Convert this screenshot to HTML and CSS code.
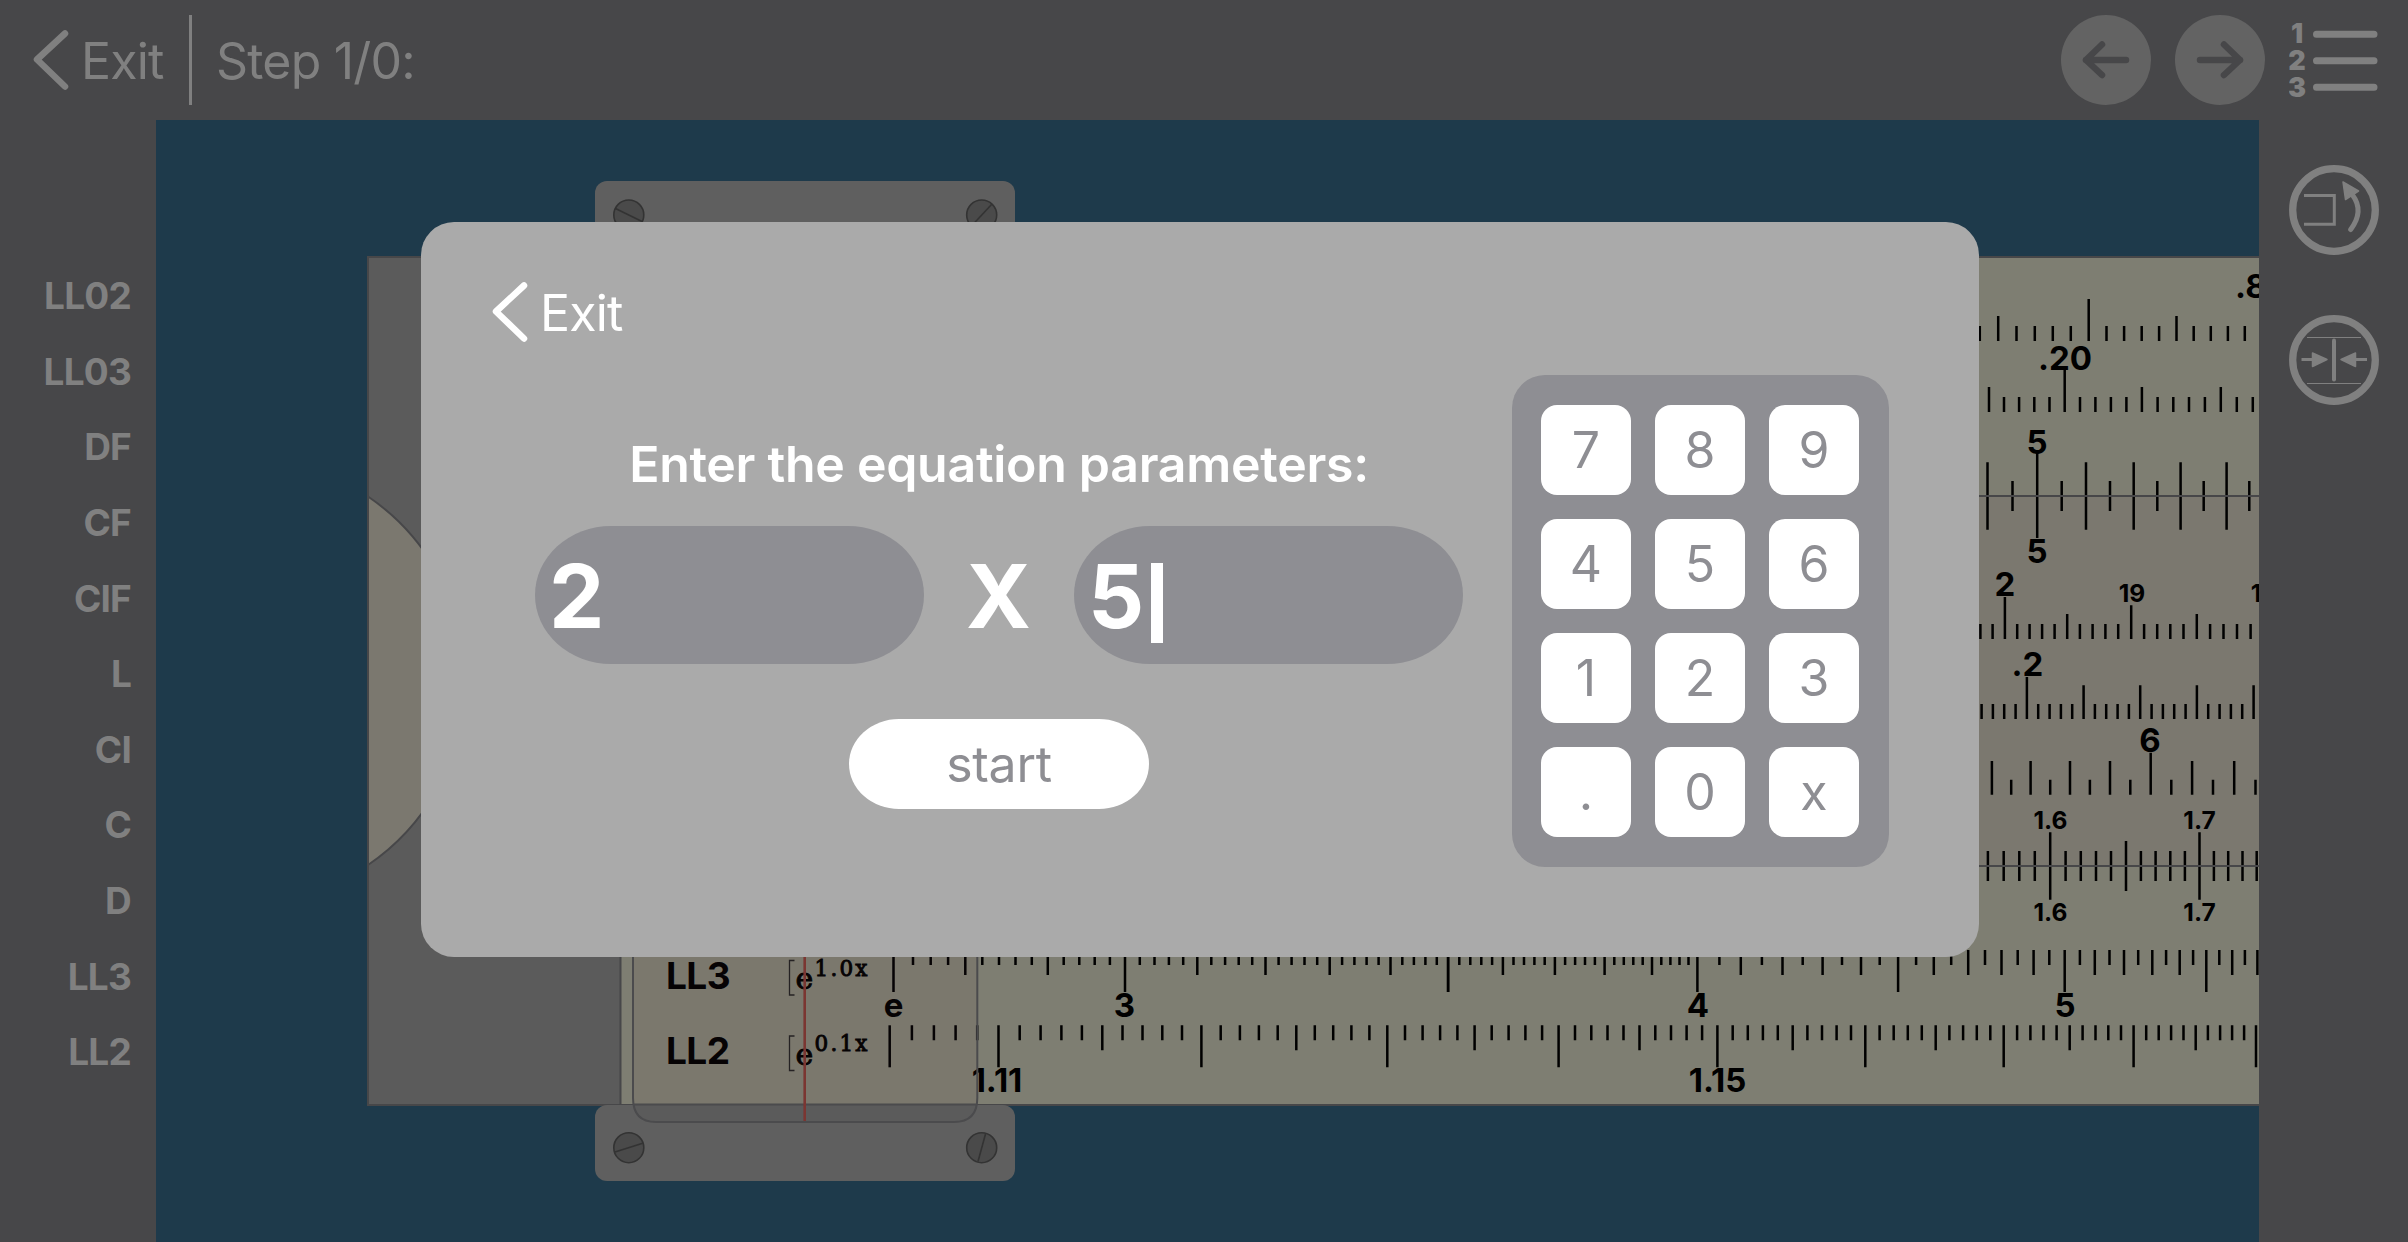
FILE: index.html
```html
<!DOCTYPE html>
<html lang="en">
<head>
<meta charset="utf-8">
<title>Slide rule</title>
<link rel="stylesheet" href="styles.css">
</head>
<body>
<div class="app">
  <header class="topbar">
    <div class="exit">
      <svg class="chevron" width="36" height="60" viewBox="0 0 36 60"><path d="M32 3.500L4 29.500L32 56.500"/></svg>
      <span class="exit-text">Exit</span>
    </div>
    <div class="divider"></div>
    <span class="step">Step 1/0:</span>
    <div class="nav">
      <svg width="90" height="90" viewBox="0 0 90 90"><circle class="disc" cx="45" cy="45" r="45"/><path class="arrow" d="M65 45H25M41 29.500L25 45L41 60"/></svg>
      <svg width="90" height="90" viewBox="0 0 90 90"><circle class="disc" cx="45" cy="45" r="45"/><path class="arrow" d="M25 45H65M49 29.500L65 45L49 60"/></svg>
      <svg class="list" width="90" height="90" viewBox="0 0 90 90">
        <text x="8" y="28">1</text><text x="8" y="55">2</text><text x="8" y="82">3</text>
        <path d="M27.500 19.300H85M27.500 45.700H85M27.500 72.300H85"/>
      </svg>
    </div>
  </header>
  <div class="main">
    <aside class="labels">
      <span>LL02</span><span>LL03</span><span>DF</span><span>CF</span><span>CIF</span><span>L</span><span>CI</span><span>C</span><span>D</span><span>LL3</span><span>LL2</span>
    </aside>
    <div class="stage">
      <svg class="rule" width="2103" height="1122" viewBox="156 120 2103 1122">
        <g class="edge">
          <rect class="metal" x="368" y="257" width="1920" height="848"/>
          <rect class="body" x="620.500" y="257" width="1700" height="848"/>
          <rect class="slide" x="620.500" y="496" width="1700" height="370"/>
          <path class="slide" d="M368 496.500A222.800 222.800 0 0 1 368 865Z"/>
        </g>
        <g id="scales"></g>
        <g class="name"><text x="666" y="988.700">LL3</text><text x="666" y="1064">LL2</text></g>
        <g class="formula">
          <path d="M794.500 960.500H789.500V995H794.500M794.500 1036H789.500V1070.500H794.500"/>
          <text class="base" x="795.500" y="989">e</text><text class="power" x="814.500" y="975.700" textLength="53">1.0x</text>
          <text class="base" x="795.500" y="1064.500">e</text><text class="power" x="814.500" y="1051.300" textLength="53">0.1x</text>
        </g>
        <g class="plate">
          <rect x="595" y="181" width="420" height="76" rx="12"/>
          <rect x="595" y="1105" width="420" height="76" rx="12"/>
        </g>
        <path class="glass-rule" d="M633 257H977V1105H633Z"/>
        <path class="glass-plate" d="M633 1105H977Q975 1122 955 1122H655Q635 1122 633 1105Z"/>
        <path class="glass-edge" d="M633 257V1098Q633 1122 656 1122H954Q977.300 1122 977.300 1098V257M633 1104.500H977"/>
        <path class="hairline" d="M804.700 257V1121"/>
        <g class="screw">
          <circle cx="628.800" cy="215" r="15"/><path d="M615.500 208.500L642 221.500"/>
          <circle cx="981.700" cy="215" r="15"/><path d="M992 204L971.500 226"/>
          <circle cx="628.800" cy="1147.700" r="15"/><path d="M615 1152L642.700 1143.300"/>
          <circle cx="981.700" cy="1147.700" r="15"/><path d="M978 1161.500L985.500 1134"/>
        </g>
      </svg>
    </div>
    <aside class="tools">
      <svg width="90" height="90" viewBox="0 0 90 90">
        <circle cx="45" cy="45" r="41.300"/>
        <path class="thin" d="M15 30.500H45.300V59.300H15"/>
        <path class="arc" d="M61.700 64.500Q75.500 46 63.500 30"/>
        <path class="head" d="M54 17L69.500 26L56.500 34.500Z"/>
      </svg>
      <svg width="90" height="90" viewBox="0 0 90 90">
        <circle cx="45" cy="45" r="41.300"/>
        <path class="hair" d="M18 22.500H72M18 68.500H72"/>
        <path class="bar" d="M45 25.500V64.500"/>
        <path class="thin" d="M12.500 44.500H24M66 44.500H78"/>
        <path class="head" d="M23.500 38L38 44.500L23.500 51.500ZM66.500 38L52 44.500L66.500 51.500Z"/>
      </svg>
    </aside>
  </div>

  <section class="dialog">
    <div class="exit">
      <svg class="chevron" width="36" height="60" viewBox="0 0 36 60"><path d="M32 3.500L4 29.500L32 56.500"/></svg>
      <span class="exit-text">Exit</span>
    </div>
    <div class="form">
      <h1 class="title">Enter the equation parameters:</h1>
      <div class="equation">
        <div class="field">2</div>
        <span class="operator">X</span>
        <div class="field">5<i class="caret"></i></div>
      </div>
      <button class="start">start</button>
    </div>
    <div class="keypad">
      <button>7</button><button>8</button><button>9</button>
      <button>4</button><button>5</button><button>6</button>
      <button>1</button><button>2</button><button>3</button>
      <button>.</button><button>0</button><button>x</button>
    </div>
  </section>
</div>
<script src="scales.js"></script>
</body>
</html>
```
FILE: styles.css
```css
* { box-sizing: border-box; }
body { margin: 0; background: #474749; font-family: Inter, "Liberation Sans", sans-serif; }
button { border: 0; padding: 0; font: inherit; color: #8e8e93; background: #fff; }
svg { display: block; flex: none; }
.app { position: relative; width: 2408px; height: 1242px; display: flex; flex-direction: column; overflow: hidden; }

.topbar { height: 120px; display: flex; align-items: center; padding: 0 29px 0 33px; color: #808080; }
.exit { display: flex; align-items: center; height: 62px; }
.chevron { fill: none; stroke: currentColor; stroke-width: 6.5; stroke-linecap: round; stroke-linejoin: round; }
.exit-text, .step { font-size: 50px; line-height: 62px; letter-spacing: -.8px; white-space: nowrap; padding-top: 2px; }
.exit-text { width: 84px; margin-left: 12px; }
.divider { width: 3px; height: 90px; margin-left: 24px; background: #808080; }
.step { margin-left: 24px; }
.nav { display: flex; gap: 24px; margin-left: auto; }
.disc { fill: #636363; }
.arrow { fill: none; stroke: #474749; stroke-width: 6.5; stroke-linecap: round; stroke-linejoin: round; }
.list { fill: #808080; font-size: 27px; font-weight: 900; text-anchor: middle; }
.list path { stroke: #808080; stroke-width: 7; stroke-linecap: round; }

.main { flex: 1; display: flex; }
.labels { width: 156px; padding: 138.2px 25px 0 0; display: flex; flex-direction: column; text-align: right; color: #808080; font-size: 37px; font-weight: 700; letter-spacing: -.8px; line-height: 75.6px; }
.stage { width: 2103px; background: #1e3a4b; overflow: hidden; }
.tools { flex: 1; padding: 45px 0 0 30px; display: flex; flex-direction: column; gap: 60px; }
.tools svg { fill: none; stroke: #808080; }
.tools circle { stroke-width: 7.3; }
.tools .thin { stroke-width: 3; }
.tools .hair { stroke-width: 1; }
.tools .bar { stroke-width: 4; stroke-linecap: round; }
.tools .arc { stroke-width: 5; stroke-linecap: round; }
.tools .head { fill: #808080; stroke-width: 1.5; stroke-linejoin: round; }

.edge { stroke: #474749; stroke-width: 2; }
.metal { fill: #5b5b5b; }
.body { fill: #7e7e72; }
.slide { fill: #7b786f; }
.tick { stroke: #000; stroke-width: 2.5; fill: none; }
.num { font-size: 33px; font-weight: 650; text-anchor: middle; }
.num-small { font-size: 24.5px; font-weight: 650; text-anchor: middle; }
.name { font-size: 37px; font-weight: 700; letter-spacing: -.6px; }
.formula { font-family: "DejaVu Serif", serif; }
.formula path { fill: none; stroke: #222; stroke-width: 1.3; }
.base { font-size: 30px; stroke: #000; stroke-width: .9; }
.power { font-size: 21.5px; stroke: #000; stroke-width: .9; }
.plate { fill: #5f5f5f; }
.glass-rule { fill: rgba(88, 40, 60, .07); }
.glass-plate { fill: #5b5b5b; }
.glass-edge { fill: none; stroke: #4b4b4d; stroke-width: 2; }
.hairline { stroke: #7b3632; stroke-width: 2.6; }
.screw { fill: #4a4a4a; stroke: #333; stroke-width: 1.6; }

.dialog { position: absolute; left: 421px; top: 222px; width: 1558px; height: 735px; padding: 59px 90px 0 71px; border-radius: 33px; background: #aaa; color: #fff; display: grid; grid-template-columns: 971px 377px; grid-template-rows: 94px auto; column-gap: 49px; }
.dialog .exit { align-self: start; }
.form { padding: 58px 0 0 43px; grid-row: 2; display: flex; flex-direction: column; align-items: center; }
.title { margin: 0 0 31px; font-size: 50px; font-weight: 600; line-height: 62px; letter-spacing: -.28px; white-space: nowrap; }
.equation { width: 928px; display: flex; align-items: center; justify-content: space-between; font-size: 88px; font-weight: 700; line-height: 138px; }
.operator { padding: 2px 1px 0 0; line-height: 136px; }
.field { width: 389px; height: 138px; padding: 2px 0 0 14px; display: flex; align-items: center; border-radius: 76px / 69px; background: #8e8e93; line-height: 136px; }
.caret { width: 12px; height: 80px; margin: 14px 0 0 7px; background: #fff; }
.start { width: 300px; height: 90px; margin-top: 55px; border-radius: 50px / 45px; font-size: 50px; letter-spacing: -.3px; }
.keypad { grid-column: 2; grid-row: 2; height: 492px; padding: 30px 0 0 29px; display: grid; grid-template-columns: repeat(3, 90px); grid-auto-rows: 90px; gap: 24px; border-radius: 33px; background: #8e8e93; }
.keypad button { border-radius: 16px; font-size: 50px; }
```
FILE: scales.js
```js
const ORIGIN = 893.5, DECADE = 5667, LEFT = 880, RIGHT = 2275;
const SHORT = 15, MID = 25, LONG = 33.7, TALL = 42;
const scales = document.getElementById('scales');

// Draws ticks for integer steps from..to (value = n * unit).
// lengths: [divisor, length] pairs, the first divisor that fits wins.
function ticks(from, to, unit, pos, y, dir, lengths) {
  let d = '';
  for (let n = from; n <= to; n++) {
    const x = ORIGIN + DECADE * pos(n * unit);
    const rule = lengths.find(([k]) => n % k === 0);
    if (!rule || !(x > LEFT && x < RIGHT)) continue;
    d += `M${x.toFixed(1)} ${y}v${dir * rule[1]}`;
  }
  scales.insertAdjacentHTML('beforeend', `<path class="tick" d="${d}"/>`);
}
function label(text, x, y, small) {
  scales.insertAdjacentHTML('beforeend', `<text class="${small ? 'num-small' : 'num'}" x="${x}" y="${y}">${text}</text>`);
}

const { log10, log, PI } = Math;
ticks(820, 900, .001, v => log10(-10 * log(v)), 341, -1, [[10, TALL], [5, MID], [1, SHORT]]);
ticks(85, 120, .002, v => log10(-log(v)), 412, -1, [[50, TALL], [5, MID], [1, SHORT]]);
for (const dir of [-1, 1]) {
  ticks(80, 120, .05, v => log10(v / PI), 496, dir, [[20, TALL], [2, LONG], [1, SHORT]]);
  ticks(140, 180, .01, v => log10(v), 866, dir, [[10, LONG], [5, MID], [1, SHORT]]);
}
ticks(175, 220, .01, v => log10(PI / v), 639, -1, [[100, TALL], [10, LONG], [5, MID], [1, SHORT]]);
ticks(80, 130, .002, v => v, 719, -1, [[50, TALL], [5, LONG], [1, SHORT]]);
ticks(110, 135, .05, v => log10(10 / v), 794.7, -1, [[20, TALL], [2, LONG], [1, SHORT]]);
ticks(137, 199, .02, v => log10(log(v)), 950, 1, [[25, TALL], [5, MID], [1, SHORT]]);
ticks(7, 7, .5, v => log10(log(v)), 950, 1, [[1, TALL]]);
ticks(80, 120, .05, v => log10(log(v)), 950, 1, [[10, TALL], [2, MID], [1, SHORT]]);
ticks(1, 1, Math.E, v => log10(log(v)) + 1e-6, 950, 1, [[1, TALL]]);
ticks(1105, 1105, .001, v => log10(10 * log(v)), 1025.3, 1, [[1, TALL]]);
ticks(1106, 1190, .001, v => log10(10 * log(v)), 1025.3, 1, [[10, TALL], [5, MID], [1, SHORT]]);

// The rule lines stay visible across the ticks of the facing scales.
scales.insertAdjacentHTML('beforeend', '<path class="edge" d="M620 496H2275M620 866H2275"/>');

label('.84', 2262, 298.3);
label('.20', 2065, 369.7);
label('5', 2037, 453.7);
label('5', 2037, 562.7);
label('2', 2005, 596.3);
label('19', 2132, 602, true);
label('18', 2264, 602, true);
label('.2', 2027.5, 676);
label('6', 2150, 751.7);
for (const y of [829, 921.3]) { label('1.6', 2050.5, y, true); label('1.7', 2199.5, y, true); }
label('e', 893.5, 1016.5);
label('3', 1124.5, 1016.7);
label('4', 1698, 1016.7);
label('5', 2065, 1016.7);
label('1.11', 997, 1092);
label('1.15', 1717.5, 1092);
```
